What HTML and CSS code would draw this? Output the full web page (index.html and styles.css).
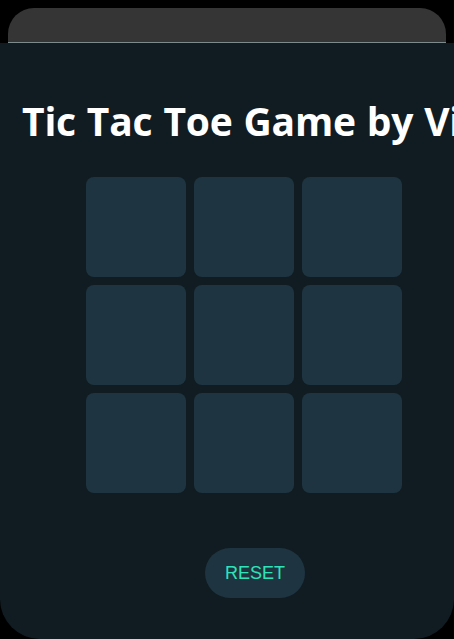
FILE: index.html
```html
<!DOCTYPE html>
<html>
<head>
<meta charset="utf-8">
<link rel="stylesheet" href="styles.css">
</head>
<body>
<div class="device">
  <div class="topbar"></div>
  <main class="screen">
    <h1 class="title">Tic Tac Toe Game by Vikas</h1>
    <div class="board">
      <div class="cell"></div><div class="cell"></div><div class="cell"></div>
      <div class="cell"></div><div class="cell"></div><div class="cell"></div>
      <div class="cell"></div><div class="cell"></div><div class="cell"></div>
    </div>
    <button class="reset">RESET</button>
  </main>
</div>
</body>
</html>
```
FILE: styles.css
```css
html, body {
  margin: 0;
  padding: 0;
  background: #000;
  overflow: hidden;
}
.device {
  width: 454px;
  height: 639px;
  display: flex;
  flex-direction: column;
  overflow: hidden;
}
.topbar {
  margin: 8px 8px 0;
  height: 34px;
  background: #353535;
  border-radius: 26px 26px 0 0;
  border-bottom: 1px solid #7e8b8c;
  flex: none;
}
.screen {
  flex: 1;
  background: #111c22;
  border-radius: 0 0 40px 40px;
  display: flex;
  flex-direction: column;
  overflow: hidden;
}
.title {
  margin: 52px 0 0 22px;
  font-family: "Open Sans", "Noto Sans", sans-serif;
  font-weight: 700;
  font-size: 39px;
  line-height: 52px;
  letter-spacing: -0.2px;
  word-spacing: 1px;
  color: #fff;
  white-space: nowrap;
}
.board {
  margin: 30px 0 0 86px;
  display: grid;
  grid-template-columns: repeat(3, 100px);
  grid-auto-rows: 100px;
  gap: 8px;
}
.cell {
  background: #1e3541;
  border-radius: 8px;
}
.reset {
  margin: 55px 0 0 205px;
  width: 100px;
  height: 50px;
  border: none;
  border-radius: 25px;
  background: #1e3541;
  color: #2ee3b9;
  font-family: "Liberation Sans", Arial, sans-serif;
  font-size: 18px;
  padding: 0;
}
```
